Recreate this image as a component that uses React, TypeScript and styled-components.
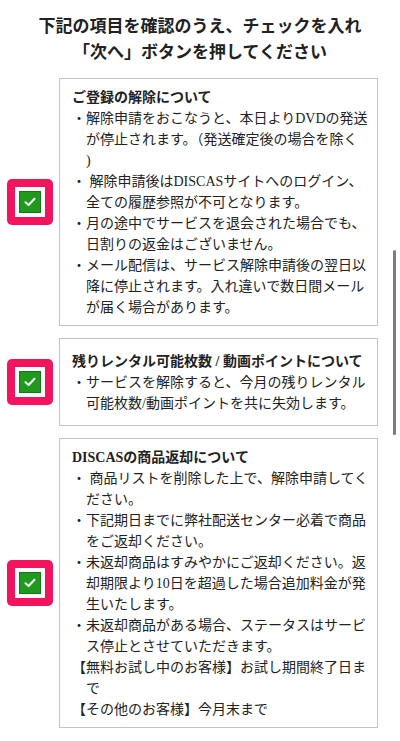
import styled, { createGlobalStyle } from 'styled-components';

const GlobalStyle = createGlobalStyle`
  html, body {
    margin: 0;
    padding: 0;
    background: #fff;
  }
  body {
    font-family: "Liberation Serif", "Noto Sans CJK JP", serif;
    color: #222;
  }
`

const Page = styled.div`
  width: 400px;
  padding: 0 22px 16px 0;
  box-sizing: border-box;
`

const Title = styled.h1`
  margin: 0;
  padding: 14px 0 13px 22px;
  font-size: 17px;
  line-height: 25.5px;
  font-weight: bold;
  text-align: center;
  color: #222;
`

const List = styled.div`
  display: flex;
  flex-direction: column;
  gap: 12px;
`

const Row = styled.div`
  display: flex;
  align-items: center;
`

const CheckCol = styled.div`
  width: 59px;
  flex-shrink: 0;
  display: flex;
  justify-content: center;
`

const CheckFrame = styled.div`
  width: 46px;
  height: 46px;
  box-sizing: border-box;
  padding: 8px;
  border-radius: 5px;
  background: #f2145c;
`

const CheckInner = styled.div`
  width: 100%;
  height: 100%;
  box-sizing: border-box;
  padding: 4px;
  background: #fff;
`

const CheckBox = styled.div`
  width: 100%;
  height: 100%;
  box-sizing: border-box;
  background: #1f9a1f;
  border: 1px solid #157a15;
  display: flex;
  align-items: center;
  justify-content: center;
`

const Card = styled.div<{ $extra?: number }>`
  flex: 1;
  min-width: 0;
  border: 1.5px solid #c4c4c4;
  padding: ${p => 8 + (p.$extra ?? 0)}px 8px ${p => 7 + (p.$extra ?? 0)}px 12px;
  font-size: 14px;
  line-height: 21px;
`

const Heading = styled.div`
  font-weight: bold;
  white-space: nowrap;
`

const Item = styled.div<{ $bullet?: boolean }>`
  padding-left: 14px;
  text-indent: -14px;
  white-space: nowrap;
  &::before {
    content: ${p => (p.$bullet ? '"・"' : '""')};
  }
`

const ScrollThumb = styled.div`
  position: fixed;
  right: 4px;
  top: 250px;
  width: 3px;
  height: 185px;
  border-radius: 2px;
  background: #7c7c7c;
`

type Entry = { lines: string[]; bullet?: boolean }

type Section = { heading: string; items: Entry[]; extra?: number }

const sections: Section[] = [
  {
    heading: 'ご登録の解除について',
    items: [
      { bullet: true, lines: ['解除申請をおこなうと、本日よりDVDの発送', 'が停止されます。（発送確定後の場合を除く', ')'] },
      { bullet: true, lines: [' 解除申請後はDISCASサイトへのログイン、', '全ての履歴参照が不可となります。'] },
      { bullet: true, lines: ['月の途中でサービスを退会された場合でも、', '日割りの返金はございません。'] },
      { bullet: true, lines: ['メール配信は、サービス解除申請後の翌日以', '降に停止されます。入れ違いで数日間メール', 'が届く場合があります。'] },
    ],
  },
  {
    heading: '残りレンタル可能枚数 / 動画ポイントについて',
    extra: 4,
    items: [
      { bullet: true, lines: ['サービスを解除すると、今月の残りレンタル', '可能枚数/動画ポイントを共に失効します。'] },
    ],
  },
  {
    heading: 'DISCASの商品返却について',
    items: [
      { bullet: true, lines: [' 商品リストを削除した上で、解除申請してく', 'ださい。'] },
      { bullet: true, lines: ['下記期日までに弊社配送センター必着で商品', 'をご返却ください。'] },
      { bullet: true, lines: ['未返却商品はすみやかにご返却ください。返', '却期限より10日を超過した場合追加料金が発', '生いたします。'] },
      { bullet: true, lines: ['未返却商品がある場合、ステータスはサービ', 'ス停止とさせていただきます。'] },
      { lines: ['【無料お試し中のお客様】お試し期間終了日ま', 'で'] },
      { lines: ['【その他のお客様】今月末まで'] },
    ],
  },
]

function Check() {
  return (
    <CheckFrame>
      <CheckInner>
        <CheckBox>
          <svg width="12" height="10" viewBox="0 0 12 10" fill="none">
            <path d="M1.5 5.2 L4.6 8 L10.5 1.8" stroke="#fff" strokeWidth="2" strokeLinecap="round" strokeLinejoin="round" />
          </svg>
        </CheckBox>
      </CheckInner>
    </CheckFrame>
  )
}

export default function App() {
  return (
    <>
      <GlobalStyle />
      <Page>
        <Title>
          下記の項目を確認のうえ、チェックを入れ<br />
          「次へ」ボタンを押してください
        </Title>
        <List>
          {sections.map(s => (
            <Row key={s.heading}>
              <CheckCol>
                <Check />
              </CheckCol>
              <Card $extra={s.extra}>
                <Heading>{s.heading}</Heading>
                {s.items.map((it, i) => (
                  <Item key={i} $bullet={it.bullet}>
                    {it.lines.map((l, j) => (
                      <span key={j}>
                        {j > 0 && <br />}
                        {l}
                      </span>
                    ))}
                  </Item>
                ))}
              </Card>
            </Row>
          ))}
        </List>
      </Page>
      <ScrollThumb />
    </>
  )
}
